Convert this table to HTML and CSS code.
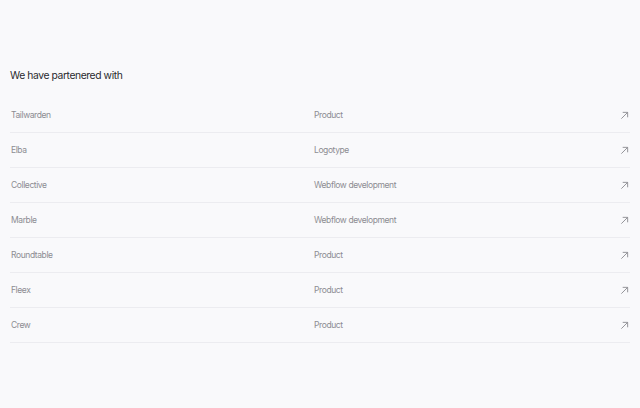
FILE: index.html
```
<!DOCTYPE html>
<html lang="en">
<head>
  <meta charset="UTF-8">
  <title>Partners</title>
  <link rel="stylesheet" href="styles.css">
</head>
<body>
  <section class="partners">
    <h2 class="title">We have partenered with</h2>
    <ul class="list">
      <li class="row"><span class="name">Tailwarden</span><span class="kind">Product</span><svg class="arrow" viewBox="0 0 10 10"><path d="M1.5 8.5 L8.5 1.5 M3 1.5 H8.5 V7"/></svg></li>
      <li class="row"><span class="name">Elba</span><span class="kind">Logotype</span><svg class="arrow" viewBox="0 0 10 10"><path d="M1.5 8.5 L8.5 1.5 M3 1.5 H8.5 V7"/></svg></li>
      <li class="row"><span class="name">Collective</span><span class="kind">Webflow development</span><svg class="arrow" viewBox="0 0 10 10"><path d="M1.5 8.5 L8.5 1.5 M3 1.5 H8.5 V7"/></svg></li>
      <li class="row"><span class="name">Marble</span><span class="kind">Webflow development</span><svg class="arrow" viewBox="0 0 10 10"><path d="M1.5 8.5 L8.5 1.5 M3 1.5 H8.5 V7"/></svg></li>
      <li class="row"><span class="name">Roundtable</span><span class="kind">Product</span><svg class="arrow" viewBox="0 0 10 10"><path d="M1.5 8.5 L8.5 1.5 M3 1.5 H8.5 V7"/></svg></li>
      <li class="row"><span class="name">Fleex</span><span class="kind">Product</span><svg class="arrow" viewBox="0 0 10 10"><path d="M1.5 8.5 L8.5 1.5 M3 1.5 H8.5 V7"/></svg></li>
      <li class="row"><span class="name">Crew</span><span class="kind">Product</span><svg class="arrow" viewBox="0 0 10 10"><path d="M1.5 8.5 L8.5 1.5 M3 1.5 H8.5 V7"/></svg></li>
    </ul>
  </section>
</body>
</html>
```

FILE: styles.css
```
* {
  margin: 0;
  padding: 0;
  box-sizing: border-box;
}

body {
  background: #f9f9fb;
  font-family: 'Inter', sans-serif;
  min-height: 100vh;
}

.partners {
  padding: 68px 10px 0;
}

.title {
  font-weight: 400;
  font-size: 10.3px;
  letter-spacing: -0.4px;
  color: #2a2a2e;
  line-height: 14px;
  margin-bottom: 16px;
}

.list {
  list-style: none;
}

.row {
  display: grid;
  grid-template-columns: 304px 1fr auto;
  align-items: center;
  height: 35px;
  border-bottom: 1px solid #ececf0;
  font-size: 8.5px;
  letter-spacing: -0.4px;
  color: #8c8c92;
}

.name {
  padding-left: 1px;
}

.arrow {
  width: 9px;
  height: 9px;
  margin-right: 1px;
  fill: none;
  stroke: #8a8a90;
  stroke-width: 1;
}
```
